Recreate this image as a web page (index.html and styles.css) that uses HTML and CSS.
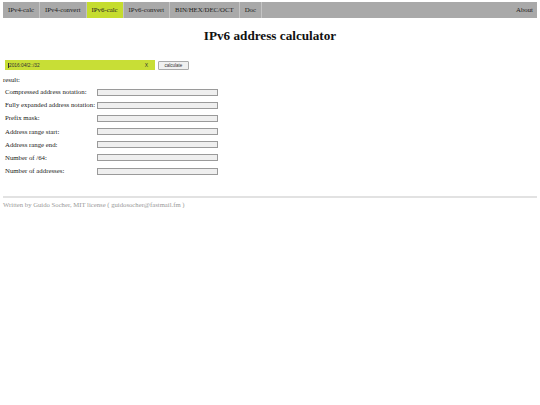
FILE: index.html
```html
<!DOCTYPE html>
<html>
<head>
<meta charset="utf-8">
<title>IPv6 address calculator</title>
<link rel="stylesheet" href="styles.css">
</head>
<body>
<nav class="nav">
  <a class="nav-item">IPv4-calc</a>
  <a class="nav-item">IPv4-convert</a>
  <a class="nav-item active">IPv6-calc</a>
  <a class="nav-item">IPv6-convert</a>
  <a class="nav-item">BIN/HEX/DEC/OCT</a>
  <a class="nav-item">Doc</a>
  <a class="nav-item about">About</a>
</nav>
<h1 class="title">IPv6 address calculator</h1>
<div class="form">
  <div class="addr">
    <span class="addr-text">2016:04f2::/32</span>
    <span class="addr-x">X</span>
  </div>
  <button class="calc">calculate</button>
</div>
<div class="result-label">result:</div>
<div class="results">
  <div class="row"><span class="label">Compressed address notation:</span><span class="out"></span></div>
  <div class="row"><span class="label">Fully expanded address notation:</span><span class="out"></span></div>
  <div class="row"><span class="label">Prefix mask:</span><span class="out"></span></div>
  <div class="row"><span class="label">Address range start:</span><span class="out"></span></div>
  <div class="row"><span class="label">Address range end:</span><span class="out"></span></div>
  <div class="row"><span class="label">Number of /64:</span><span class="out"></span></div>
  <div class="row"><span class="label">Number of addresses:</span><span class="out"></span></div>
</div>
<hr class="rule">
<footer class="footer">Written by Guido Socher, MIT license ( guidosocher@fastmail.fm )</footer>
</body>
</html>
```

FILE: styles.css
```css
html, body {
  margin: 0;
  padding: 0;
  background: #fff;
}
body {
  padding: 2px 3px 0 3px;
  font-family: "Liberation Serif", "Times New Roman", serif;
  color: #222;
}
.nav {
  display: flex;
  background: #a9a9a9;
  height: 16px;
}
.nav-item {
  display: block;
  padding: 0 5px;
  line-height: 16px;
  font-size: 6.8px;
  color: #222;
  border-right: 1px solid #c4c4c4;
}
.nav-item.active {
  background: #c5dc2e;
}
.nav-item.about {
  margin-left: auto;
  border-right: none;
  padding-right: 4px;
}
.title {
  margin: 10px 0 0 0;
  text-align: center;
  font-size: 13.2px;
  line-height: 15px;
  font-weight: bold;
  color: #111;
}
.form {
  display: flex;
  align-items: center;
  margin: 17px 0 0 2px;
}
.addr {
  display: flex;
  align-items: center;
  justify-content: space-between;
  width: 150px;
  height: 10px;
  background: #c8de36;
  box-sizing: border-box;
  padding: 0 7px 0 3px;
  font-family: "Liberation Sans", Arial, sans-serif;
  font-size: 4.8px;
  color: #333;
}
.addr-text {
  border-left: 1px solid #333;
}
.addr-x {
  font-size: 5px;
}
.calc {
  margin-left: 3px;
  height: 9px;
  width: 31px;
  padding: 0;
  font-family: "Liberation Sans", Arial, sans-serif;
  font-size: 4.5px;
  color: #333;
  background: #f0f0f0;
  border: 1px solid #aaa;
  border-radius: 1px;
}
.result-label {
  margin-top: 6px;
  font-size: 6.8px;
  line-height: 8px;
}
.results {
  display: flex;
  flex-direction: column;
  gap: 5.2px;
  margin: 4px 0 0 2px;
}
.row {
  display: grid;
  grid-template-columns: 92px 121px;
  align-items: center;
  height: 8px;
}
.label {
  font-size: 6.8px;
  line-height: 8px;
  white-space: nowrap;
}
.out {
  display: block;
  height: 7px;
  background: #efefef;
  border: 1px solid #9a9a9a;
  box-sizing: border-box;
}
.rule {
  margin: 21px 0 0 0;
  border: none;
  height: 2px;
  background: #e2e2e2;
}
.footer {
  margin-top: 3px;
  font-size: 6.7px;
  color: #999;
}
```
